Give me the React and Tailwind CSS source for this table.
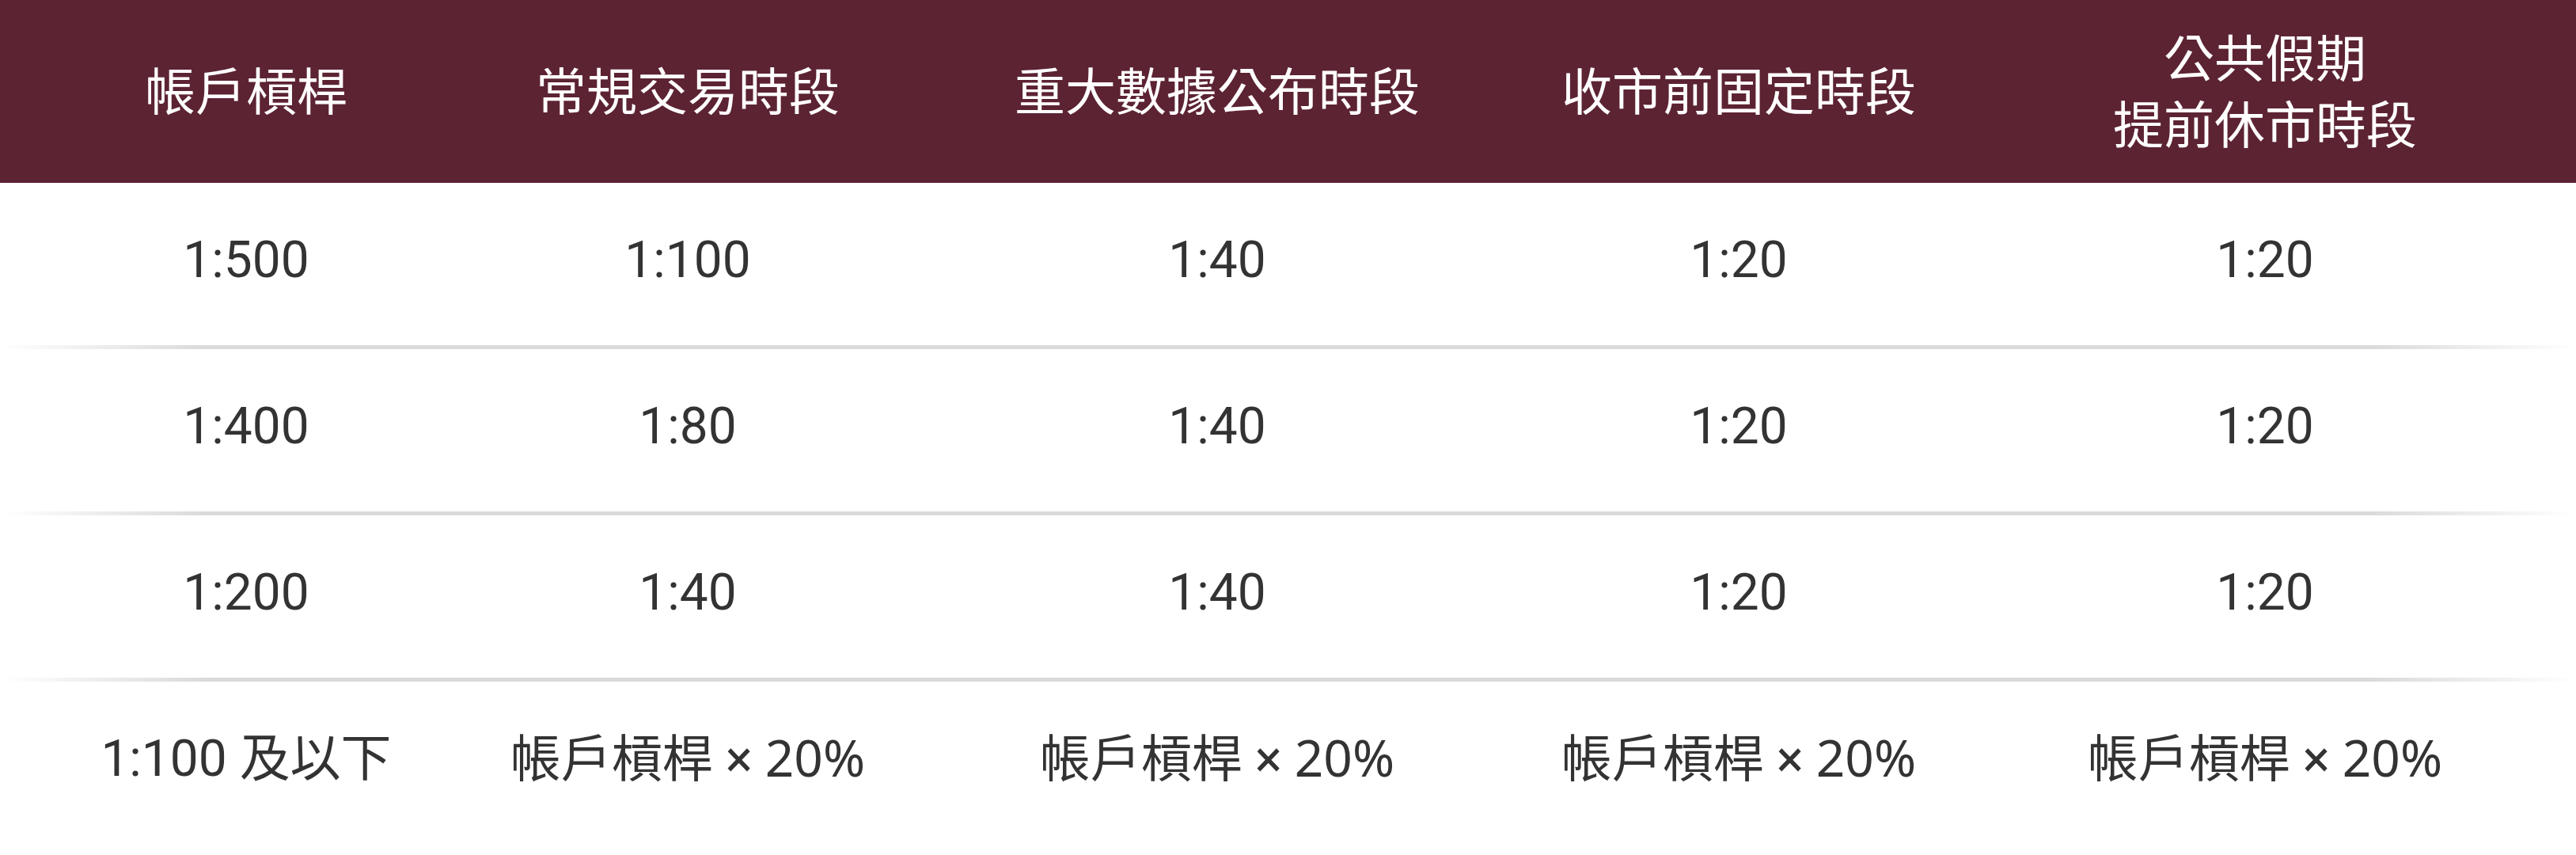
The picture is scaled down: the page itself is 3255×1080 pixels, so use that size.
import React from "react";

const headers = [
  ["帳戶槓桿"],
  ["常規交易時段"],
  ["重大數據公布時段"],
  ["收市前固定時段"],
  ["公共假期", "提前休市時段"]
];

const Scaled = () => (
  <>
    帳戶槓桿 × <span className="font-['Noto_Sans',sans-serif]">20%</span>
  </>
);

const rows = [
  ["1:500", "1:100", "1:40", "1:20", "1:20"],
  ["1:400", "1:80", "1:40", "1:20", "1:20"],
  ["1:200", "1:40", "1:40", "1:20", "1:20"],
  ["1:100 及以下", <Scaled />, <Scaled />, <Scaled />, <Scaled />]
];

// column widths tuned so each cell's centered text lands where the reference has it
const cols = "grid w-[3290px] grid-cols-[622px_494px_844px_474px_856px]";

const App = () => {
  return (
    <div className="w-[3255px] h-[1080px] overflow-hidden bg-white font-['Roboto','Noto_Sans_CJK_TC',sans-serif] text-[64px]">
      <div className="h-[231px] bg-[#5c2333] text-white">
        <div className={`${cols} h-full`}>
          {headers.map((lines, i) => (
            <div key={i} className="flex flex-col items-center justify-center pt-[5px] text-center leading-[84px]">
              {lines.map((line, j) => (
                <span key={j}>{line}</span>
              ))}
            </div>
          ))}
        </div>
      </div>
      {rows.map((row, r) => (
        <div key={r}>
          {r > 0 && (
            <div className="h-[5px] bg-[linear-gradient(to_right,rgba(218,218,218,0)_0%,#dadada_8%,#dadada_92%,rgba(218,218,218,0)_100%)]"></div>
          )}
          <div className={`${cols} h-[205px] text-[#333333]`}>
            {row.map((cell, c) => (
              <div key={c} className="flex items-center justify-center pb-[10px] leading-none whitespace-nowrap">
                <span>{cell}</span>
              </div>
            ))}
          </div>
        </div>
      ))}
    </div>
  );
};

export default App;
